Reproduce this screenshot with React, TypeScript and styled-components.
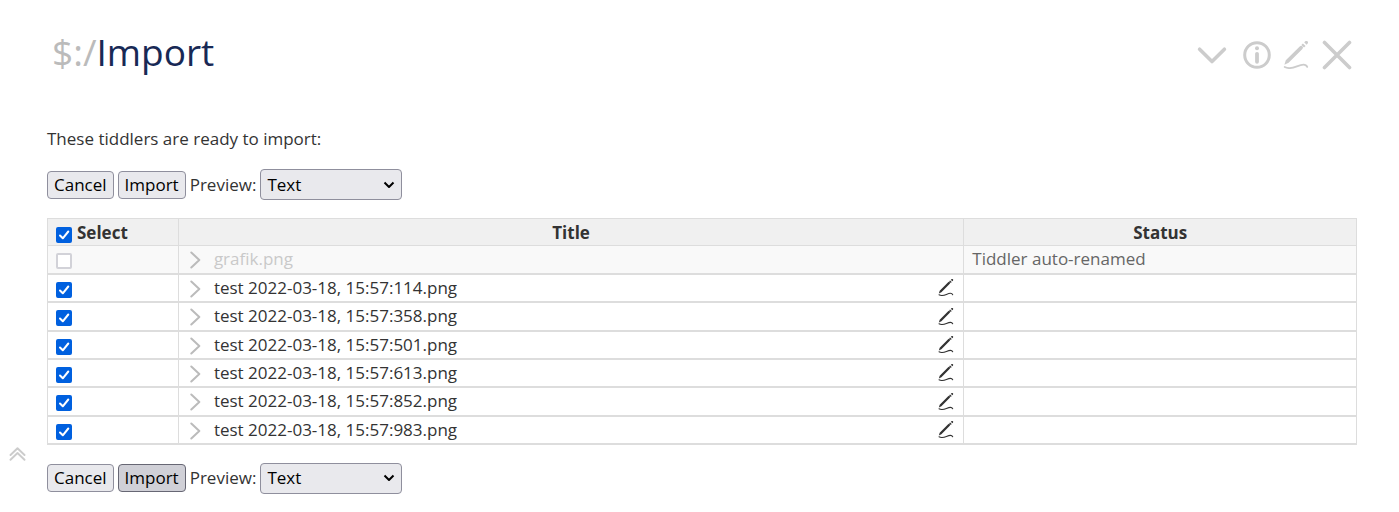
import React, { useState } from "react";
import styled, { createGlobalStyle } from "styled-components";

const GlobalStyle = createGlobalStyle`
  *, *::before, *::after { box-sizing: border-box; }
  body {
    margin: 0;
    background: #ffffff;
    color: #333333;
    font-family: "Open Sans", "Noto Sans", sans-serif;
    font-size: 17px;
    line-height: 24px;
  }
`;

const Page = styled.div`
  display: grid;
  grid-template-columns: 47px minmax(0, 1fr) 42px;
  padding: 27px 0 18px;
`;

const Gutter = styled.aside`
  display: flex;
  flex-direction: column;
  justify-content: flex-end;
  align-items: flex-start;
  padding: 0 0 33px 9px;
`;

const Tiddler = styled.main`
  display: flex;
  flex-direction: column;
`;

const TitleBar = styled.header`
  display: flex;
  justify-content: space-between;
  align-items: center;
  padding: 0 5px;
`;

const Title = styled.h1`
  margin: 0;
  font-size: 37px;
  line-height: 50px;
  font-weight: 400;
  color: #182955;
`;

const TitlePrefix = styled.span`
  color: #bbbbbb;
`;

const TitleControls = styled.div`
  display: flex;
  align-items: center;
  gap: 11px;
  padding-top: 6px;
`;

const IconButton = styled.button<{ $color: string }>`
  display: flex;
  padding: 0;
  border: 0;
  background: none;
  color: ${(p) => p.$color};
  cursor: pointer;

  svg { display: block; }
`;

const Intro = styled.p`
  margin: 50px 0 18px;
`;

const Toolbar = styled.div`
  display: flex;
  align-items: center;
  gap: 4px;
`;

const Button = styled.button<{ $pressed?: boolean }>`
  height: 28px;
  padding: 0 6px;
  border: 1px solid ${(p) => (p.$pressed ? "#676774" : "#8f8f9d")};
  border-radius: 4px;
  background: ${(p) => (p.$pressed ? "#d0d0d7" : "#e9e9ed")};
  color: #000000;
  font: inherit;
  line-height: 24px;
`;

const PreviewLabel = styled.label`
  display: flex;
  align-items: center;
  gap: 4px;
`;

const SelectBox = styled.span`
  display: grid;
  align-items: center;
  width: 142px;
  color: #000000;

  > * { grid-area: 1 / 1; }
  > svg {
    justify-self: end;
    margin-right: 7px;
    pointer-events: none;
  }
`;

const Select = styled.select`
  appearance: none;
  width: 100%;
  height: 31px;
  padding: 0 24px 0 6px;
  border: 1px solid #8f8f9d;
  border-radius: 4px;
  background: #e9e9ed;
  color: inherit;
  font: inherit;
`;

const Table = styled.table`
  width: 100%;
  margin: 18px 0;
  border-collapse: collapse;
  table-layout: fixed;
`;

const HeadCell = styled.th<{ $width: string; $left?: boolean }>`
  width: ${(p) => p.$width};
  height: 27px;
  padding: 1px 8px 0;
  border: 1px solid #dddddd;
  background: #f0f0f0;
  text-align: ${(p) => (p.$left ? "left" : "center")};
  font-weight: 700;
`;

const Row = styled.tr<{ $muted?: boolean }>`
  height: 28px;
  background: ${(p) => (p.$muted ? "#f9f9f9" : "#ffffff")};

  &:nth-child(3n) { height: 29px; }
`;

const Cell = styled.td`
  padding: 0 8px;
  border: 1px solid #dddddd;
  border-bottom-width: 2px;
`;

const StatusCell = styled(Cell)`
  color: #666666;
`;

const CheckLabel = styled.label`
  display: flex;
  align-items: center;
  gap: 5px;
`;

const CheckBox = styled.span`
  display: grid;
  width: 16px;
  height: 16px;
  margin-top: 4px;

  > * { grid-area: 1 / 1; }
  > svg { pointer-events: none; }
`;

const CheckInput = styled.input`
  appearance: none;
  width: 16px;
  height: 16px;
  margin: 0;
  border: 2px solid #8f8f9d;
  border-radius: 2px;
  background: #ffffff;

  &:checked {
    border-color: #0060df;
    background: #0060df;
  }
  &:disabled { border-color: #d2d2d8; }
`;

const Entry = styled.div`
  display: flex;
  align-items: center;
  gap: 12px;
  padding-left: 3px;
`;

const EntryName = styled.span<{ $muted?: boolean }>`
  flex: 1;
  color: ${(p) => (p.$muted ? "#c9c9c9" : "inherit")};
`;

const PenIcon = ({ size }: { size: number }) => (
  <svg width={size} height={size} viewBox="0 0 28 28" fill="currentColor" aria-hidden="true">
    <path d="M1.400 23.800 2.800 19.200 16.700 5.400a1.800 1.800 0 0 1 2.700 2.600L5.600 21.800Z" />
    <path d="M18.300 3.900 19.900 2.400 22.600 5.100 21 6.600ZM21.200 1.200 22.100.4a1.500 1.500 0 0 1 2.400 2.300l-1 1Z" />
    <path
      d="M1.700 26C9 30 14.500 23.600 20.500 23.600c2 0 3 .7 3.700 2.300"
      fill="none"
      stroke="currentColor"
      strokeWidth="1.800"
      strokeLinecap="round"
    />
  </svg>
);

const DownIcon = () => (
  <svg width="30" height="28" viewBox="0 0 30 28" fill="none" stroke="currentColor" strokeWidth="3.600" strokeLinecap="round" strokeLinejoin="round" aria-hidden="true">
    <path d="M2.600 8.200 15 20.600 27.400 8.200" />
  </svg>
);

const InfoIcon = () => (
  <svg width="34" height="28" viewBox="-5 0 34 28" fill="none" stroke="currentColor" aria-hidden="true">
    <circle cx="14" cy="14" r="12.300" strokeWidth="3" />
    <circle cx="14" cy="7.300" r="2" fill="currentColor" stroke="none" />
    <path d="M14 12.800v8" strokeWidth="3.800" strokeLinecap="round" />
  </svg>
);

const CloseIcon = () => (
  <svg width="30" height="30" viewBox="0 0 30 30" fill="none" stroke="currentColor" strokeWidth="3.600" strokeLinecap="round" aria-hidden="true">
    <path d="M2.500 2.500 27.500 27.500M27.500 2.500 2.500 27.500" />
  </svg>
);

const ExpandIcon = () => (
  <svg width="12" height="20" viewBox="0 0 12 20" fill="none" stroke="currentColor" strokeWidth="2" strokeLinecap="round" strokeLinejoin="round" aria-hidden="true">
    <path d="M1.300 3.500 9.300 11 1.300 18.500" />
  </svg>
);

const SelectArrow = () => (
  <svg width="12" height="8" viewBox="0 0 12 8" fill="none" stroke="currentColor" strokeWidth="2" strokeLinejoin="round" aria-hidden="true">
    <path d="M1.500 1.500 6 6 10.500 1.500" />
  </svg>
);

const CheckMark = () => (
  <svg width="16" height="16" viewBox="0 0 16 16" fill="none" stroke="#ffffff" strokeWidth="2" strokeLinecap="round" strokeLinejoin="round" aria-hidden="true">
    <path d="M4 8.500 6.800 11.300 12.300 4.500" />
  </svg>
);

const ScrollTopIcon = () => (
  <svg width="17" height="14" viewBox="0 0 17 14" fill="none" stroke="currentColor" strokeWidth="1.900" strokeLinecap="round" strokeLinejoin="round" aria-hidden="true">
    <path d="M1.500 8 8.500 1.200 15.500 8M1.500 12.800 8.500 6 15.500 12.800" />
  </svg>
);

interface TickProps {
  checked: boolean;
  disabled?: boolean;
  label: string;
  onChange: () => void;
}

const Tick = ({ checked, disabled, label, onChange }: TickProps) => (
  <CheckBox>
    <CheckInput type="checkbox" aria-label={label} checked={checked} disabled={disabled} onChange={onChange} />
    {checked && <CheckMark />}
  </CheckBox>
);

const ImportBar = ({ pressed }: { pressed?: boolean }) => (
  <Toolbar>
    <Button type="button">Cancel</Button>
    <Button type="button" $pressed={pressed}>Import</Button>
    <PreviewLabel>
      Preview:
      <SelectBox>
        <Select defaultValue="Text">
          <option>Text</option>
        </Select>
        <SelectArrow />
      </SelectBox>
    </PreviewLabel>
  </Toolbar>
);

const images = ["114", "358", "501", "613", "852", "983"].map(
  (stamp) => `test 2022-03-18, 15:57:${stamp}.png`
);

export default function App() {
  const [selected, setSelected] = useState<string[]>(images);
  const allSelected = selected.length === images.length;
  const toggle = (name: string) =>
    setSelected((list) => (list.includes(name) ? list.filter((n) => n !== name) : [...list, name]));

  return (
    <>
      <GlobalStyle />
      <Page>
        <Gutter>
          <IconButton type="button" aria-label="Scroll to top" $color="#cccccc"><ScrollTopIcon /></IconButton>
        </Gutter>
        <Tiddler>
          <TitleBar>
            <Title><TitlePrefix>$:/</TitlePrefix>Import</Title>
            <TitleControls>
              <IconButton type="button" aria-label="More" $color="#cccccc"><DownIcon /></IconButton>
              <IconButton type="button" aria-label="Info" $color="#cccccc"><InfoIcon /></IconButton>
              <IconButton type="button" aria-label="Edit" $color="#cccccc"><PenIcon size={28} /></IconButton>
              <IconButton type="button" aria-label="Close" $color="#cccccc"><CloseIcon /></IconButton>
            </TitleControls>
          </TitleBar>
          <Intro>These tiddlers are ready to import:</Intro>
          <ImportBar />
          <Table>
            <thead>
              <tr>
                <HeadCell $width="10%" $left>
                  <CheckLabel>
                    <Tick
                      checked={allSelected}
                      label="Select all"
                      onChange={() => setSelected(allSelected ? [] : images)}
                    />
                    Select
                  </CheckLabel>
                </HeadCell>
                <HeadCell $width="60%">Title</HeadCell>
                <HeadCell $width="30%">Status</HeadCell>
              </tr>
            </thead>
            <tbody>
              <Row $muted>
                <Cell><Tick checked={false} disabled label="grafik.png" onChange={() => {}} /></Cell>
                <Cell>
                  <Entry>
                    <IconButton type="button" aria-label="Show preview" $color="#bbbbbb"><ExpandIcon /></IconButton>
                    <EntryName $muted>grafik.png</EntryName>
                  </Entry>
                </Cell>
                <StatusCell>Tiddler auto-renamed</StatusCell>
              </Row>
              {images.map((name) => (
                <Row key={name}>
                  <Cell><Tick checked={selected.includes(name)} label={name} onChange={() => toggle(name)} /></Cell>
                  <Cell>
                    <Entry>
                      <IconButton type="button" aria-label="Show preview" $color="#bbbbbb"><ExpandIcon /></IconButton>
                      <EntryName>{name}</EntryName>
                      <IconButton type="button" aria-label="Rename" $color="#333333"><PenIcon size={17} /></IconButton>
                    </Entry>
                  </Cell>
                  <StatusCell />
                </Row>
              ))}
            </tbody>
          </Table>
          <ImportBar pressed />
        </Tiddler>
      </Page>
    </>
  );
}
